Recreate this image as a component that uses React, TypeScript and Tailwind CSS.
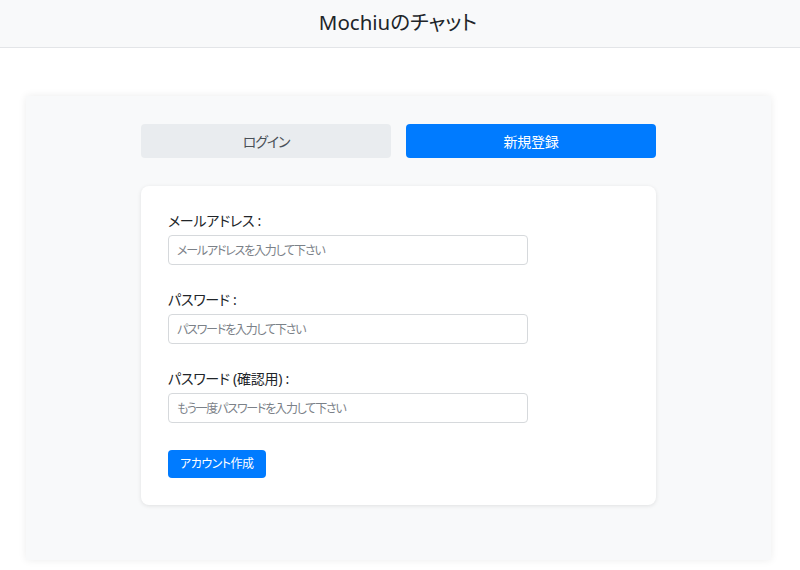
import { useState } from "react";

// フォームの項目
const fields = [
  { id: "email", label: "メールアドレス :", placeholder: "メールアドレスを入力して下さい", type: "email" },
  { id: "password", label: "パスワード :", placeholder: "パスワードを入力して下さい", type: "password" },
  { id: "confirm", label: "パスワード (確認用) :", placeholder: "もう一度パスワードを入力して下さい", type: "password" },
];

export default function App() {
  const [tab, setTab] = useState<"login" | "signup">("signup");
  const [values, setValues] = useState<Record<string, string>>({});

  return (
    <div className="min-h-[570px] bg-white text-[#212529] font-['Noto_Sans','Noto_Sans_CJK_JP',sans-serif] [font-feature-settings:'palt']">
      {/* HEADER */}
      <header className="h-[48px] bg-[#f8f9fa] border-b border-[#e3e5e8] flex items-center justify-center">
        <h1 className="text-[20.5px] font-normal text-[#212529] pb-[2px] pr-[4px]">Mochiuのチャット</h1>
      </header>

      {/* パネル */}
      <section className="ml-[26px] mt-[48px] w-[745px] h-[464px] bg-[#f8f9fa] shadow-[0_0_8px_rgba(0,0,0,0.08)] pt-[28px] flex flex-col items-center">
        {/* タブ */}
        <div className="flex gap-[15px]">
          <button
            onClick={() => setTab("login")}
            className={`w-[250px] h-[34px] rounded-[4px] text-[14px] tracking-[-0.08em] ${tab === "login" ? "bg-[#007bff] text-white" : "bg-[#e9ecef] text-[#495057]"}`}
          >
            ログイン
          </button>
          <button
            onClick={() => setTab("signup")}
            className={`w-[250px] h-[34px] rounded-[4px] text-[14px] tracking-[-0.02em] ${tab === "signup" ? "bg-[#007bff] text-white" : "bg-[#e9ecef] text-[#495057]"}`}
          >
            新規登録
          </button>
        </div>

        {/* カード */}
        <div className="mt-[28px] w-[515px] bg-white rounded-[8px] shadow-[0_1px_4px_rgba(0,0,0,0.1)] pl-[27px] pr-[27px] pt-[25px] pb-[27px]">
          {fields.map((f) => (
            <div key={f.id} className="mb-[25px]">
              <label htmlFor={f.id} className="block h-[20px] leading-[20px] text-[14px] tracking-[-0.02em] mb-[4px]">
                {f.label}
              </label>
              <input
                id={f.id}
                type={f.type}
                placeholder={f.placeholder}
                value={values[f.id] ?? ""}
                onChange={(e) => setValues({ ...values, [f.id]: e.target.value })}
                className="block w-[360px] h-[30px] px-[8px] border border-[#d6d9dc] rounded-[4px] text-[12px] tracking-[-0.1em] text-[#495057] placeholder:text-[#7b8188] outline-none focus:border-[#80bdff]"
              />
            </div>
          ))}
          <button className="mt-[2px] h-[28px] px-[12px] bg-[#007bff] text-white text-[12px] tracking-[-0.04em] rounded-[4px]">
            アカウント作成
          </button>
        </div>
      </section>
    </div>
  );
}
